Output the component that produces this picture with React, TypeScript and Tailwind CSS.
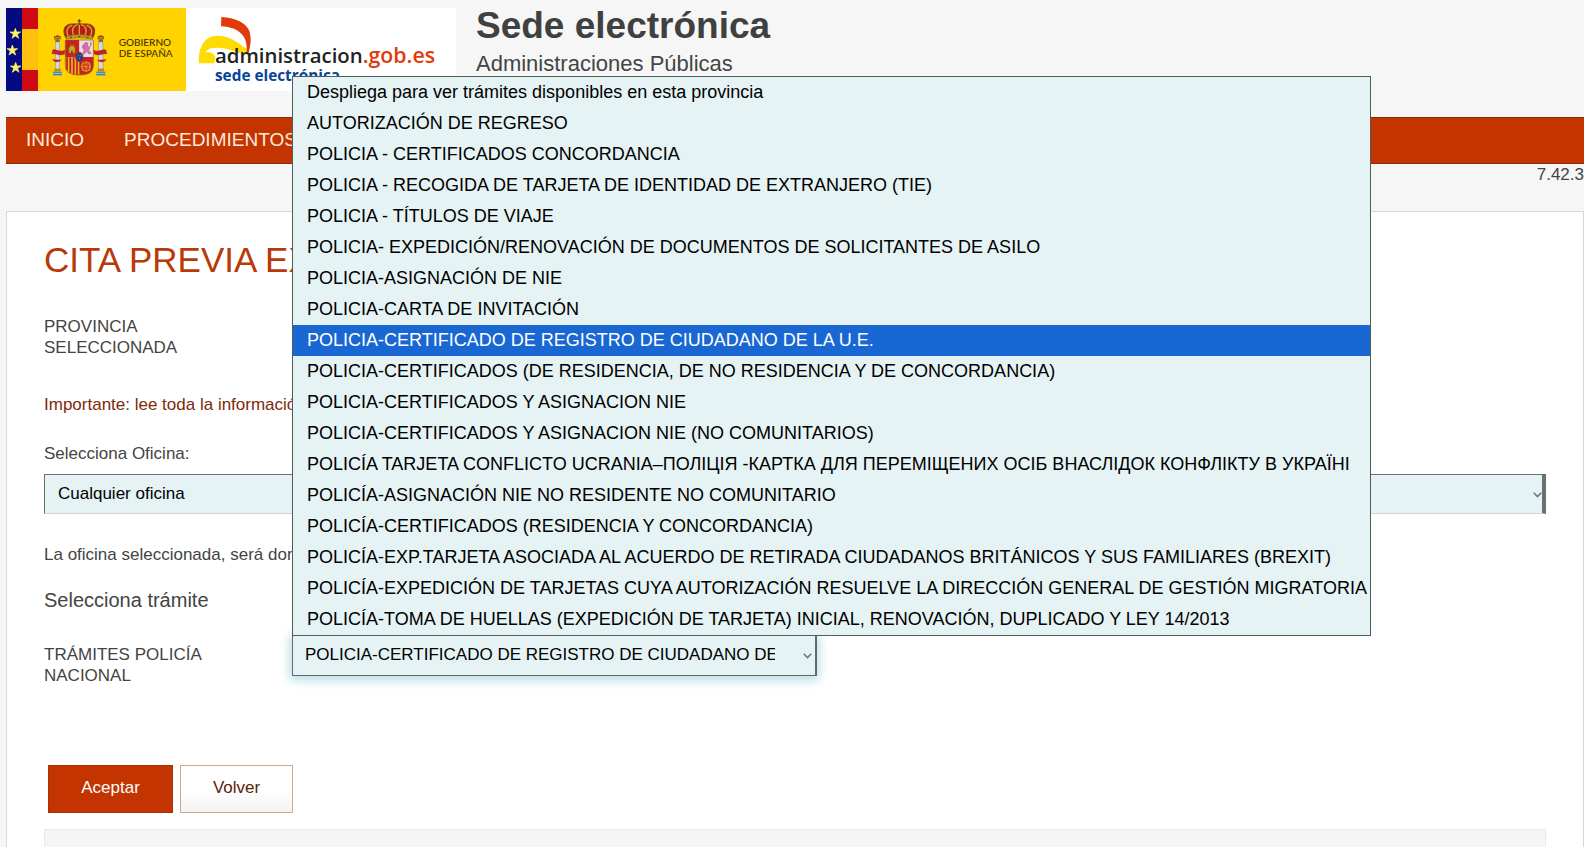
import { useState } from "react"

const tramites = [
    "Despliega para ver trámites disponibles en esta provincia",
    "AUTORIZACIÓN DE REGRESO",
    "POLICIA - CERTIFICADOS CONCORDANCIA",
    "POLICIA - RECOGIDA DE TARJETA DE IDENTIDAD DE EXTRANJERO (TIE)",
    "POLICIA - TÍTULOS DE VIAJE",
    "POLICIA- EXPEDICIÓN/RENOVACIÓN DE DOCUMENTOS DE SOLICITANTES DE ASILO",
    "POLICIA-ASIGNACIÓN DE NIE",
    "POLICIA-CARTA DE INVITACIÓN",
    "POLICIA-CERTIFICADO DE REGISTRO DE CIUDADANO DE LA U.E.",
    "POLICIA-CERTIFICADOS (DE RESIDENCIA, DE NO RESIDENCIA Y DE CONCORDANCIA)",
    "POLICIA-CERTIFICADOS Y ASIGNACION NIE",
    "POLICIA-CERTIFICADOS Y ASIGNACION NIE (NO COMUNITARIOS)",
    "POLICÍA TARJETA CONFLICTO UCRANIA–ПОЛІЦІЯ -КАРТКА ДЛЯ ПЕРЕМІЩЕНИХ ОСІБ ВНАСЛІДОК КОНФЛІКТУ В УКРАЇНІ",
    "POLICÍA-ASIGNACIÓN NIE NO RESIDENTE NO COMUNITARIO",
    "POLICÍA-CERTIFICADOS (RESIDENCIA Y CONCORDANCIA)",
    "POLICÍA-EXP.TARJETA ASOCIADA AL ACUERDO DE RETIRADA CIUDADANOS BRITÁNICOS Y SUS FAMILIARES (BREXIT)",
    "POLICÍA-EXPEDICIÓN DE TARJETAS CUYA AUTORIZACIÓN RESUELVE LA DIRECCIÓN GENERAL DE GESTIÓN MIGRATORIA",
    "POLICÍA-TOMA DE HUELLAS (EXPEDICIÓN DE TARJETA) INICIAL, RENOVACIÓN, DUPLICADO Y LEY 14/2013",
]

function Column({ x }: { x: number }) {
    return (
        <g transform={`translate(${x} 0)`}>
            <rect x="2" y="110" width="17" height="7" fill="#b98a1c" stroke="#5a3a10" strokeWidth="1.5" />
            <path d="M4 110q6-8 13 0z" fill="#b3202a" />
            <rect x="4" y="118" width="13" height="8" fill="#8b6a1a" />
            <rect x="4" y="126" width="13" height="86" fill="#d5d8d6" stroke="#8b8b86" strokeWidth="1.5" />
            <rect x="1" y="206" width="19" height="8" fill="#b98a1c" />
            <path d="M-3 215h27v11h-27z" fill="#3d7fae" />
            <path d="M-3 220h27" stroke="#d9e6ee" strokeWidth="2" />
        </g>
    )
}

function GobiernoLogo() {
    const star = "M0-16 4-5 16-5 6 2 10 14 0 7-10 14-6 2-16-5-4-5z"
    return (
        <svg className="w-[180px] h-[83px]" viewBox="18 24 540 249" role="img" aria-label="Gobierno de España">
            <rect x="18" y="24" width="540" height="249" fill="#ffd200" />
            <rect x="18" y="24" width="48" height="249" fill="#060a80" />
            <rect x="66" y="24" width="48" height="63" fill="#cf0a14" />
            <rect x="66" y="87" width="48" height="123" fill="#fdc10e" />
            <rect x="66" y="210" width="48" height="63" fill="#cf0a14" />
            <g fill="#fbf36b" stroke="#fbf36b" strokeWidth="2">
                <path d={star} transform="translate(46 101)" />
                <path d={star} transform="translate(37 151)" />
                <path d={star} transform="translate(47 203)" />
            </g>
            <Column x={162} />
            <Column x={292} />
            {/* crown */}
            <path d="M198 114c-8-14-9-29 1-37 10-8 26-4 39-6 13 2 29-2 39 6 10 8 9 23 1 37q-40-8-80 0z" fill="#b51c22" stroke="#7c5a12" strokeWidth="3" />
            <path d="M205 108c-10-18 0-30 12-31M221 106c-8-17 0-30 12-32M238 104V72M255 106c8-17 0-30-12-32M271 108c10-18 0-30-12-31" fill="none" stroke="#dba51e" strokeWidth="4" />
            <path d="M238 57v14M232 63h12" stroke="#4e3b0c" strokeWidth="3" />
            <circle cx="238" cy="72" r="4" fill="#7c5a12" />
            <path d="M199 108q39-9 78 0v9q-39-8-78 0z" fill="#c99418" stroke="#7c5a12" strokeWidth="1.5" />
            <path d="M210 112h6M235 110h6M260 112h6" stroke="#2a5c86" strokeWidth="4" />
            {/* shield */}
            <path d="M196 120h42v51h-42z" fill="#c6202b" />
            <path d="M238 120h42v51h-42z" fill="#eadde2" />
            <path d="M196 171h42v54c-28 0-42-8-42-30z" fill="#e5b31b" />
            <path d="M238 171h42v24c0 22-14 30-42 30z" fill="#c6202b" />
            <path d="M201 172v39M211 172v47M221 172v51M231 172v53" stroke="#c6202b" strokeWidth="5" />
            <path d="M206 160v-19h4v-8h4v4h4v-4h4v8h4v19z" fill="#d3a21b" stroke="#6f4310" strokeWidth="1.5" />
            <path d="M213 160v-8h5v8z" fill="#2b4a86" />
            <path d="M251 133l6-6 7 3-2 8 7 5-3 8 7 9-7 1-6-8-8 10-4-2 5-11-6-6 1-8 7 3zM269 142q8-8 3-17" fill="#d673a6" stroke="#c0508d" strokeWidth="2" />
            <path d="M258 184v32M243 200h30M247 189l22 22M269 189l-22 22" stroke="#e0a91c" strokeWidth="2" />
            <rect x="247" y="189" width="22" height="22" fill="none" stroke="#e0a91c" strokeWidth="2" />
            <circle cx="258" cy="200" r="14" fill="none" stroke="#e0a91c" strokeWidth="2" />
            <path d="M196 120h84v75c0 22-14 30-42 30s-42-8-42-30z" fill="none" stroke="#8b5a1c" strokeWidth="2" />
            <ellipse cx="238" cy="171" rx="11" ry="14" fill="#17468f" stroke="#b51c22" strokeWidth="2" />
            <path d="M234 167h2M241 167h2M237 175h2" stroke="#e0a91c" strokeWidth="3" />
            {/* ribbons */}
            <path d="M195 151c-15 8-25-4-36-1l-3 11c12-2 22 8 38 0M158 178q8 14 26 2M281 151c15 8 25-4 36-1l3 11c-12-2-22 8-38 0M318 178q-8 14-26 2" fill="#c6202b" stroke="#a31a22" strokeWidth="2" />
            <g fontFamily="Lato, sans-serif" fontSize="30" fontWeight="500" fill="#3f3205">
                <text x="356" y="139">GOBIERNO</text>
                <text x="356" y="171">DE ESPAÑA</text>
            </g>
        </svg>
    )
}

function AdministracionLogo() {
    return (
        <svg className="w-[270px] h-[83px]" viewBox="18 24 810 249" role="img" aria-label="administracion.gob.es sede electrónica">
            <rect x="18" y="24" width="810" height="249" fill="#fff" />
            <path d="M57 190C54 150 68 107 112 107c40 0 62 22 98 47l-18 8c-30-6-50-20-84-19-16 1-28 5-31 14 14-2 26 2 29 14l-3 19z" fill="#ffdc00" />
            <path d="M124 51c40 2 74 16 84 42 6 18 5 42-2 63h-6c4-46-20-74-77-77z" fill="#e23a0a" />
            <g fontFamily="'Open Sans', sans-serif">
                <text x="105" y="190" fontSize="61" fontWeight="600" fill="#222">administracion</text>
                <text x="548" y="190" fontSize="64" fontWeight="600" fill="#e23a0a">.gob.es</text>
                <text x="105" y="242" fontSize="46" fontWeight="700" fill="#0a4497">sede electrónica</text>
            </g>
        </svg>
    )
}

function Chevron({ className }: { className: string }) {
    return (
        <svg className={`absolute w-[9px] h-[6px] pointer-events-none ${className}`} viewBox="0 0 9 6" fill="none" aria-hidden="true">
            <path stroke="#6b7676" strokeWidth="1.5" d="M.7.8 4.5 4.6 8.3.8" />
        </svg>
    )
}

export default function App() {
    const [tramite, setTramite] = useState(8)
    return (
        <div className="h-screen overflow-hidden bg-[#f6f6f6] pl-1.5 pt-2 font-['Liberation_Sans',Arial,sans-serif] text-[17px] leading-[21px] text-[#444]">
            <header className="flex">
                <GobiernoLogo />
                <AdministracionLogo />
                <div className="ml-5">
                    <p className="text-[37px] leading-9 font-bold text-[#3f4040]">Sede electrónica</p>
                    <p className="mt-1 text-[22px] leading-8">Administraciones Públicas</p>
                </div>
            </header>

            <nav className="mt-[26px] flex h-[47px] items-center gap-10 border-y border-[#8f2a05] bg-[#c33400] px-5 pb-0.5 text-[19px] text-[#ffe9dc]">
                <a href="#inicio">INICIO</a>
                <a href="#procedimientos">PROCEDIMIENTOS</a>
            </nav>
            <p className="h-[47px] text-right">7.42.3</p>

            <main className="h-screen border border-[#d5d7d8] bg-white px-[37px] pt-7">
                <h1 className="text-[35px] leading-10 text-[#b93a08]">CITA PREVIA EXTRANJERÍA</h1>
                <p className="mt-9 w-40">PROVINCIA SELECCIONADA</p>
                <p className="mt-9 text-[#7d2a08]">Importante: lee toda la información</p>

                <label htmlFor="oficina" className="mt-7 block">Selecciona Oficina:</label>
                <div className="relative mt-2.5">
                    <select id="oficina" className="block h-10 w-full appearance-none border border-r-4 border-[#6b7070] border-b-[#d0d4d4] bg-[#e5f3f4] pb-0.5 pl-[13px] text-[17px] text-black">
                        <option>Cualquier oficina</option>
                    </select>
                    <Chevron className="right-1 top-[18px]" />
                </div>

                <p className="mt-[30px]">La oficina seleccionada, será donde</p>
                <h2 className="mt-[23px] text-[20px] leading-6">Selecciona trámite</h2>

                <div className="mt-[23px] flex items-start">
                    <label htmlFor="tramite" className="mt-[9px] w-[248px] pr-16">TRÁMITES POLICÍA NACIONAL</label>
                    <div className="relative w-[525px]">
                        <select
                            id="tramite"
                            value={tramite}
                            onChange={(e) => setTramite(Number(e.target.value))}
                            className="block h-[41px] w-full appearance-none border border-r-2 border-[#5f6b6b] bg-[#e5f3f4] pb-0.5 pl-3 pr-10 text-[17px] text-black shadow-[0_2px_10px_2px_#b5dde3]"
                        >
                            {tramites.map((t, i) => <option key={t} value={i}>{t}</option>)}
                        </select>
                        <Chevron className="right-[5px] top-[18px]" />
                        <ul className="absolute bottom-10 left-0 w-[1079px] border border-[#4f5c5c] bg-[#e5f3f4] text-[18px] text-black">
                            {tramites.map((t, i) => (
                                <li key={t}>
                                    <button
                                        type="button"
                                        onClick={() => setTramite(i)}
                                        className={`block h-[31px] w-full whitespace-nowrap pl-3.5 text-left ${i === tramite ? "bg-[#1967d2] text-white" : ""}`}
                                    >
                                        {t}
                                    </button>
                                </li>
                            ))}
                        </ul>
                    </div>
                </div>

                <div className="mt-[79px] ml-1 flex gap-[7px]">
                    <button type="button" className="h-12 w-[125px] border border-[#a83205] bg-[#c33400] pb-1 text-white">Aceptar</button>
                    <button type="button" className="h-12 w-[113px] border border-[#d9a48c] bg-linear-to-b from-white from-50% to-[#f3f3f3] pb-1 text-[#5a2208]">Volver</button>
                </div>
                <div className="mt-4 h-20 border border-[#e9ebeb] bg-[#f6f5f6]" />
            </main>
        </div>
    )
}
